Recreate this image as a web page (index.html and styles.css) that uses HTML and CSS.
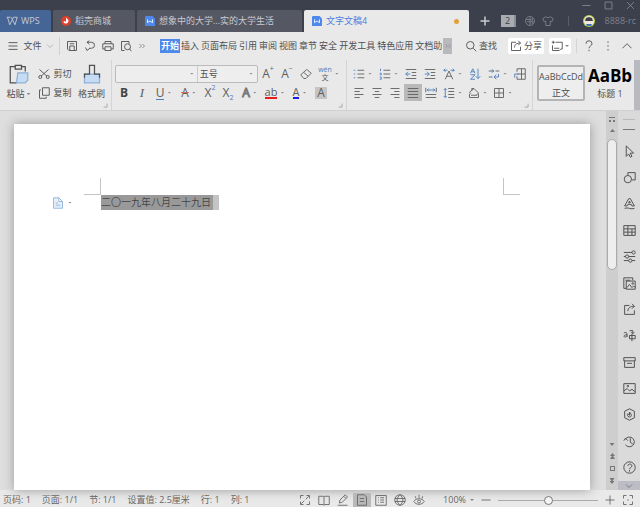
FILE: index.html
```html
<!DOCTYPE html>
<html lang="zh-CN">
<head>
<meta charset="UTF-8">
<meta name="viewport" content="width=device-width, initial-scale=1.0">
<title>文字文稿4 - WPS</title>
<link rel="stylesheet" href="styles.css">
</head>
<body>

<!-- 图标 -->
<svg class="sprite" aria-hidden="true">
  <symbol id="menu" viewBox="0 0 16 16"><path d="M2 3.500h12M2 8h12M2 12.500h12"/></symbol>
  <symbol id="down" viewBox="0 0 16 16"><path d="M2 5l6 6 6-6"/></symbol>
  <symbol id="up" viewBox="0 0 16 16"><path d="M2 11l6-6 6 6"/></symbol>
  <symbol id="save" viewBox="0 0 16 16"><path d="M2 2h12v12H4l-2-2zM5 14V8h6v6M5 5h6"/></symbol>
  <symbol id="undo" viewBox="0 0 16 16"><path d="M4 3h6a4 4 0 0 1 0 8H7M7 1L4 3l3 3M2 10l2 4 4-3"/></symbol>
  <symbol id="print" viewBox="0 0 16 16"><path d="M4 5V2h8v3M4 12H1V5h14v7h-3M4 9h8v5H4z"/></symbol>
  <symbol id="preview" viewBox="0 0 16 16"><path d="M6 14H2V2h10v3M13 12l2 3"/><circle cx="10" cy="9" r="4"/></symbol>
  <symbol id="more" viewBox="0 0 16 16"><path d="M3 4l4 4-4 4M9 4l4 4-4 4"/></symbol>
  <symbol id="search" viewBox="0 0 16 16"><circle cx="7" cy="7" r="5"/><path d="M11 11l4 4"/></symbol>
  <symbol id="share" viewBox="0 0 16 16"><path d="M8 3H2v11h12V9M6 10c0-4 3-6 8-6M11 1l3 3-3 3"/></symbol>
  <symbol id="comment" viewBox="0 0 16 16"><path d="M6 3h9v9h-2M2 7v7h9l2-2M1 3h4M3 1v4M4 11h7"/></symbol>
  <symbol id="help" viewBox="0 0 16 16"><path d="M4 5a4 4 0 0 1 8 0c0 3-4 3-4 6M8 13v2"/></symbol>
  <symbol id="dots" viewBox="0 0 16 16"><path d="M8 2v2M8 7v2M8 12v2"/></symbol>
  <symbol id="plus" viewBox="0 0 16 16"><path d="M8 2v12M2 8h12"/></symbol>
  <symbol id="minus" viewBox="0 0 16 16"><path d="M2 8h12"/></symbol>
  <symbol id="square" viewBox="0 0 16 16"><path d="M3 3h10v10H3z"/></symbol>
  <symbol id="close" viewBox="0 0 16 16"><path d="M3 3l10 10M13 3L3 13"/></symbol>
  <symbol id="wps" viewBox="0 0 16 16"><path d="M1 3h5M2 3l3 10 5-10h5l-3 10L7 3"/></symbol>
  <symbol id="globe2" viewBox="0 0 16 16"><circle cx="8" cy="8" r="6"/><path d="M3 6h7M4 9h9M8 3v11M11 4v8"/></symbol>
  <symbol id="shirt" viewBox="0 0 16 16"><path d="M5 2L1 5l2 4 2-1v6h6V8l2 1 2-4-4-3c-1 2-5 2-6 0z"/></symbol>
  <symbol id="cut" viewBox="0 0 16 16"><path d="M2 2l10 9M14 2L4 11"/><circle cx="3" cy="12" r="2"/><circle cx="13" cy="12" r="2"/></symbol>
  <symbol id="copy" viewBox="0 0 16 16"><path d="M6 1h9v10H6zM4 4H2v11h9v-2"/></symbol>
  <symbol id="paste" viewBox="0 0 16 16"><path d="M5 2H1v13h5M10 2h3v4M5 1h5v3H5z"/><path class="fill" d="M7 7h8v6l-2 2H6z"/></symbol>
  <symbol id="brush" viewBox="0 0 16 16"><path class="fill" d="M2 8h12v7H2z"/><path d="M2 11V8h4V1h4v7h4v3"/></symbol>
  <symbol id="eraser" viewBox="0 0 16 16"><path d="M1 9l8-7 6 5-7 7H5zM5 6l6 5"/></symbol>
  <symbol id="bullets" viewBox="0 0 16 16"><path d="M6 3h9M6 8h9M6 13h9"/><path class="blue" d="M1 3h2M1 8h2M1 13h2"/></symbol>
  <symbol id="numbers" viewBox="0 0 16 16"><path d="M6 3h9M6 8h9M6 13h9"/><path class="blue" d="M2 1v3M1 7h2v2H1M1 12h2v3H1"/></symbol>
  <symbol id="outdent" viewBox="0 0 16 16"><path d="M1 2h14M9 6h6M9 10h6M1 14h14"/><path class="blue" d="M7 8H1M4 5L1 8l3 3"/></symbol>
  <symbol id="indent" viewBox="0 0 16 16"><path d="M1 2h14M9 6h6M9 10h6M1 14h14"/><path class="blue" d="M1 8h6M4 5l3 3-3 3"/></symbol>
  <symbol id="scale" viewBox="0 0 16 16"><path d="M3 15L8 4l5 11M5 11h6"/><path class="blue" d="M1 3h5M3 1L1 3l2 2M15 3h-5M13 1l2 2-2 2"/></symbol>
  <symbol id="sort" viewBox="0 0 16 16"><path class="blue" d="M2 7l3-6 3 6M3 5h4M2 9h6l-6 6h6M12 1v13M9 11l3 3 3-3"/></symbol>
  <symbol id="wrap" viewBox="0 0 16 16"><path d="M1 4h6M10 4h5M1 12h5"/><path class="blue" d="M5 2l3 2-3 2M14 8v4H8M11 9l-3 3 3 3"/></symbol>
  <symbol id="tabs" viewBox="0 0 16 16"><path d="M4 1h11v14H4v-4M10 1v14M4 8h11M4 1v4"/><path class="blue" d="M6 8H1v5"/></symbol>
  <symbol id="left" viewBox="0 0 16 16"><path d="M2 2h12M2 6h7M2 10h12M2 14h7"/></symbol>
  <symbol id="center" viewBox="0 0 16 16"><path d="M2 2h12M5 6h6M2 10h12M5 14h6"/></symbol>
  <symbol id="right" viewBox="0 0 16 16"><path d="M2 2h12M7 6h7M2 10h12M7 14h7"/></symbol>
  <symbol id="justify" viewBox="0 0 16 16"><path d="M1 2h14M1 6h14M1 10h14M1 14h14"/></symbol>
  <symbol id="spread" viewBox="0 0 16 16"><path d="M1 10h14M1 14h14M1 1v6M15 1v6"/><path class="blue" d="M3 4h10M5 2L3 4l2 2M11 2l2 2-2 2"/></symbol>
  <symbol id="spacing" viewBox="0 0 16 16"><path d="M7 2h8M7 6h8M7 10h8M7 14h8"/><path class="blue" d="M3 2v12M1 4l2-2 2 2M1 12l2 2 2-2"/></symbol>
  <symbol id="bucket" viewBox="0 0 16 16"><path d="M4 9L2 7l6-5 6 6-3 3M5 5V2h3M2 9v5h12V9M4 11h8"/></symbol>
  <symbol id="grid" viewBox="0 0 16 16"><path d="M2 2h12v12H2zM8 2v12M2 8h12"/></symbol>
  <symbol id="pointer" viewBox="0 0 16 16"><path d="M4 1l9 9H9l2 4-2 1-2-4-3 3z"/></symbol>
  <symbol id="shapes" viewBox="0 0 16 16"><circle cx="6" cy="10" r="4.500"/><path d="M6 5V2h9v9h-4"/></symbol>
  <symbol id="wordart" viewBox="0 0 16 16"><path d="M2 11L7 2h2l5 9h-3l-1-2H6l-1 2zM7 7h2L8 5zM2 14c4-2 8 2 12 0"/></symbol>
  <symbol id="table" viewBox="0 0 16 16"><path d="M1 2h14v12H1zM1 6h14M1 10h14M6 2v12M11 6v8"/></symbol>
  <symbol id="sliders" viewBox="0 0 16 16"><path d="M1 3h10M1 8h2M7 8h8M1 13h6M11 13h4"/><circle cx="13" cy="3" r="2"/><circle cx="5" cy="8" r="2"/><circle cx="9" cy="13" r="2"/></symbol>
  <symbol id="gallery" viewBox="0 0 16 16"><path d="M4 14H1V1h11v3M4 5h11v10H4zM5 13l3-4 3 4 2-2 2 2M3 4h6"/><circle cx="12" cy="8" r="1"/></symbol>
  <symbol id="translate" viewBox="0 0 16 16"><path d="M1 5c4-2 4 0 4 5M5 7c-4 0-5 3-2 3l2-2M8 8h7v4H8zM11 6v9M8 2h4v3M10 4l2 2 2-2"/></symbol>
  <symbol id="archive" viewBox="0 0 16 16"><path d="M1 2h14v4H1zM2 6v8h12V6M5 9h6"/></symbol>
  <symbol id="image" viewBox="0 0 16 16"><path d="M1 2h14v12H1zM1 11l4-3 3 3 3-2 4 3"/><circle cx="6" cy="5" r="1"/></symbol>
  <symbol id="hexagon" viewBox="0 0 16 16"><path d="M8 1l6 3v8l-6 3-6-3V4zM8 5c3 3 3 6 0 6S5 8 6 7l2 2z"/></symbol>
  <symbol id="history" viewBox="0 0 16 16"><path d="M3 5a6 6 0 1 1 0 7M1 7l2-3 3 3M9 4v5l3 2"/></symbol>
  <symbol id="question" viewBox="0 0 16 16"><circle cx="8" cy="8" r="7"/><path d="M6 6c0-3 5-3 5 0 0 2-3 2-3 4M8 11v2"/></symbol>
  <symbol id="full" viewBox="0 0 16 16"><path d="M2 6V2h4M10 2h4v4M14 10v4h-4M6 14H2v-4M9 7l4-4M7 9l-4 4"/></symbol>
  <symbol id="book" viewBox="0 0 16 16"><path d="M1 3h6l1 1 1-1h6v11H9l-1 1-1-1H1zM8 4v11"/></symbol>
  <symbol id="pen" viewBox="0 0 16 16"><path d="M3 12l1-4 7-7 3 3-7 7zM1 15h13M9 3l3 3"/></symbol>
  <symbol id="page" viewBox="0 0 16 16"><path d="M2 1h9l3 3v11H2zM5 6h6M5 10h6"/></symbol>
  <symbol id="outline" viewBox="0 0 16 16"><path d="M1 2h14v13H1zM4 5h1M7 5h5M4 8h1M7 8h5M4 11h1M7 11h5"/></symbol>
  <symbol id="web" viewBox="0 0 16 16"><circle cx="8" cy="8" r="7"/><path d="M1 6h14M1 10h14M8 1c-5 4-5 10 0 14 5-4 5-10 0-14"/></symbol>
  <symbol id="eye" viewBox="0 0 16 16"><path d="M1 10c3-5 11-5 14 0-3 5-11 5-14 0M3 3l1 3M8 1v4M13 3l-1 3"/><circle cx="8" cy="10" r="2"/></symbol>
  <symbol id="fit" viewBox="0 0 16 16"><path d="M2 6V2h4M10 2h4v4M14 10v4h-4M6 14H2v-4M7 8h2"/></symbol>
  <symbol id="corner" viewBox="0 0 16 16"><path d="M2 13h11V2"/></symbol>
</svg>

<!-- 标题栏 -->
<header class="titlebar">
  <nav class="tabs">
    <a class="tab home" href="#"><svg class="icon"><use href="#wps"/></svg>WPS</a>
    <a class="tab store" href="#">
      <svg class="logo" viewBox="0 0 12 12"><circle cx="6" cy="6" r="6" fill="#df3f2d"/><path d="M6 2c3 2 4 4 2 6s-5 1-5-1l1-1 2 1z" fill="#fff"/></svg>稻壳商城</a>
    <a class="tab doc" href="#">
      <svg class="logo" viewBox="0 0 12 12"><path d="M1 0h8l3 3v9H0V1z" fill="#4d88ea"/><path d="M3 4v4l3-2 3 2V4" fill="none" stroke="#fff" stroke-width="1"/></svg>想象中的大学...实的大学生活</a>
    <a class="tab doc current" href="#">
      <svg class="logo" viewBox="0 0 12 12"><path d="M1 0h8l3 3v9H0V1z" fill="#4d88ea"/><path d="M3 4v4l3-2 3 2V4" fill="none" stroke="#fff" stroke-width="1"/></svg>文字文稿4<span class="unsaved"></span></a>
  </nav>
  <button class="new-tab" aria-label="新建"><svg class="icon"><use href="#plus"/></svg></button>
  <span class="count">2</span>
  <div class="account-area">
    <div class="window-buttons">
      <button aria-label="最小化"><svg class="icon"><use href="#minus"/></svg></button>
      <button aria-label="最大化"><svg class="icon"><use href="#square"/></svg></button>
      <button aria-label="关闭"><svg class="icon"><use href="#close"/></svg></button>
    </div>
    <div class="account">
      <svg class="icon"><use href="#globe2"/></svg>
      <svg class="icon"><use href="#shirt"/></svg>
      <span class="bar"></span>
      <svg class="avatar" viewBox="0 0 12 12"><circle cx="6" cy="6" r="6" fill="#b5d44b"/><circle cx="6" cy="6" r="5" fill="#f2e6df"/><path d="M2 6l1-3 3-1 3 1 1 3z" fill="#44404a"/><path d="M3 9h6l-1 2H4z" fill="#3d72b8"/></svg>
      <span class="user">8888-rc</span>
    </div>
  </div>
</header>

<!-- 菜单栏 -->
<div class="menubar">
  <button class="file"><svg class="icon"><use href="#menu"/></svg>文件<svg class="icon tiny"><use href="#down"/></svg></button>
  <div class="quick">
    <button aria-label="保存"><svg class="icon"><use href="#save"/></svg></button>
    <button aria-label="撤销"><svg class="icon"><use href="#undo"/></svg></button>
    <button aria-label="打印"><svg class="icon"><use href="#print"/></svg></button>
    <button aria-label="打印预览"><svg class="icon"><use href="#preview"/></svg></button>
    <button aria-label="更多"><svg class="icon tiny"><use href="#more"/></svg></button>
  </div>
  <nav class="menus">
    <a class="on" href="#">开始</a><a href="#">插入</a><a href="#">页面布局</a><a href="#">引用</a><a href="#">审阅</a><a href="#">视图</a><a href="#">章节</a><a href="#">安全</a><a href="#">开发工具</a><a href="#">特色应用</a><a href="#">文档助</a>
  </nav>
  <button class="scroll-menus" aria-label="向右"><svg class="icon tiny"><use href="#more"/></svg></button>
  <div class="menu-tools">
    <button class="find"><svg class="icon"><use href="#search"/></svg>查找</button>
    <button class="white"><svg class="icon"><use href="#share"/></svg>分享</button>
    <button class="white" aria-label="批注"><svg class="icon"><use href="#comment"/></svg><i class="caret"></i></button>
    <span class="divider"></span>
    <button class="plain" aria-label="帮助"><svg class="icon"><use href="#help"/></svg></button>
    <button class="plain" aria-label="选项"><svg class="icon"><use href="#dots"/></svg></button>
    <button class="plain" aria-label="收起"><svg class="icon"><use href="#up"/></svg></button>
  </div>
</div>

<!-- 功能区 -->
<div class="ribbon">
  <section class="group clipboard">
    <button class="big"><svg class="icon large"><use href="#paste"/></svg><span>粘贴<i class="caret"></i></span></button>
    <div class="pair">
      <button><svg class="icon"><use href="#cut"/></svg>剪切</button>
      <button><svg class="icon"><use href="#copy"/></svg>复制</button>
    </div>
    <button class="big"><svg class="icon large"><use href="#brush"/></svg><span>格式刷</span></button>
    <svg class="launcher"><use href="#corner"/></svg>
  </section>

  <section class="group font">
    <div class="row spaced">
      <div class="combo">
        <input class="family" type="text" aria-label="字体"><i class="caret"></i>
        <input class="size" type="text" aria-label="字号" value="五号"><i class="caret"></i>
      </div>
      <button class="tool">A<sup>+</sup></button>
      <button class="tool">A<sup>−</sup></button>
      <button class="tool" aria-label="清除格式"><svg class="icon"><use href="#eraser"/></svg></button>
      <button class="tool wide"><span class="pinyin"><b>wén</b><span>文</span></span><i class="caret"></i></button>
    </div>
    <div class="row">
      <button class="tool bold">B</button>
      <button class="tool italic">I</button>
      <button class="tool wide"><span class="under">U</span><i class="caret"></i></button>
      <button class="tool wide"><span class="strike">A</span><i class="caret"></i></button>
      <button class="tool">X<sup class="blue-text">2</sup></button>
      <button class="tool">X<sub class="blue-text">2</sub></button>
      <button class="tool wide"><span class="hollow">A</span><i class="caret"></i></button>
      <button class="tool wide"><span class="mark red">ab</span><i class="caret"></i></button>
      <button class="tool wide"><span class="mark">A</span><i class="caret"></i></button>
      <button class="tool"><span class="shade">A</span></button>
    </div>
    <svg class="launcher"><use href="#corner"/></svg>
  </section>

  <section class="group paragraph">
    <div class="row spaced">
      <button class="tool wide" aria-label="项目符号"><svg class="icon"><use href="#bullets"/></svg><i class="caret"></i></button>
      <button class="tool wide" aria-label="编号"><svg class="icon"><use href="#numbers"/></svg><i class="caret"></i></button>
      <button class="tool" aria-label="减少缩进"><svg class="icon"><use href="#outdent"/></svg></button>
      <button class="tool" aria-label="增加缩进"><svg class="icon"><use href="#indent"/></svg></button>
      <button class="tool wide" aria-label="字符缩放"><svg class="icon"><use href="#scale"/></svg><i class="caret"></i></button>
      <button class="tool" aria-label="排序"><svg class="icon"><use href="#sort"/></svg></button>
      <button class="tool wide" aria-label="换行"><svg class="icon"><use href="#wrap"/></svg><i class="caret"></i></button>
      <button class="tool" aria-label="制表位"><svg class="icon"><use href="#tabs"/></svg></button>
    </div>
    <div class="row">
      <button class="tool" aria-label="左对齐"><svg class="icon"><use href="#left"/></svg></button>
      <button class="tool" aria-label="居中"><svg class="icon"><use href="#center"/></svg></button>
      <button class="tool" aria-label="右对齐"><svg class="icon"><use href="#right"/></svg></button>
      <button class="tool pressed" aria-label="两端对齐"><svg class="icon"><use href="#justify"/></svg></button>
      <button class="tool" aria-label="分散对齐"><svg class="icon"><use href="#spread"/></svg></button>
      <button class="tool wide" aria-label="行距"><svg class="icon"><use href="#spacing"/></svg><i class="caret"></i></button>
      <button class="tool wide" aria-label="底纹"><svg class="icon"><use href="#bucket"/></svg><i class="caret"></i></button>
      <button class="tool wide" aria-label="边框"><svg class="icon"><use href="#grid"/></svg><i class="caret"></i></button>
    </div>
    <svg class="launcher"><use href="#corner"/></svg>
  </section>

  <section class="styles">
    <button class="style chosen"><span class="sample">AaBbCcDd</span><span>正文</span></button>
    <button class="style"><span class="sample heading">AaBb</span><span>标题 1</span></button>
  </section>
  <button class="ribbon-scroll" aria-label="更多"></button>
</div>

<!-- 文档区 -->
<main class="workspace">
  <div class="canvas">
    <article class="page">
      <div class="margins"><span class="crop top-left"></span><span class="crop top-right"></span></div>
      <div class="line">
        <button class="para-mark" aria-label="段落">
          <svg class="icon" viewBox="0 0 16 16"><path class="pale" d="M2 1h7l5 5v9H2zM9 1v5h5M5 8h3M5 11h6"/></svg><i class="caret"></i>
        </button>
        <p><span class="selected">二〇一九年八月二十九日</span></p>
      </div>
    </article>
  </div>
  <div class="scrollbar">
    <i class="ruler-mark"></i>
    <i class="arrow upward"></i>
    <div class="track"><div class="thumb"></div></div>
    <i class="arrow"></i>
    <i class="arrow double upward"></i>
    <i class="dot"></i>
    <i class="arrow double"></i>
  </div>
  <aside class="sidebar">
    <i class="grip"></i>
    <div class="side-icons">
      <button aria-label="选择"><svg class="icon"><use href="#pointer"/></svg></button>
      <button aria-label="形状"><svg class="icon"><use href="#shapes"/></svg></button>
      <button aria-label="艺术字"><svg class="icon"><use href="#wordart"/></svg></button>
      <button aria-label="表格"><svg class="icon"><use href="#table"/></svg></button>
      <button aria-label="属性"><svg class="icon"><use href="#sliders"/></svg></button>
      <button aria-label="图库"><svg class="icon"><use href="#gallery"/></svg></button>
      <button aria-label="分享"><svg class="icon"><use href="#share"/></svg></button>
      <button aria-label="翻译"><svg class="icon"><use href="#translate"/></svg></button>
      <button aria-label="归档"><svg class="icon"><use href="#archive"/></svg></button>
      <button aria-label="图片"><svg class="icon"><use href="#image"/></svg></button>
      <button aria-label="稻壳"><svg class="icon"><use href="#hexagon"/></svg></button>
      <button aria-label="历史"><svg class="icon"><use href="#history"/></svg></button>
      <button aria-label="帮助"><svg class="icon"><use href="#question"/></svg></button>
    </div>
    <button class="side-more" aria-label="更多"><svg class="icon tiny"><use href="#down"/></svg></button>
  </aside>
</main>

<!-- 状态栏 -->
<footer class="status">
  <div class="info">
    <span>页码: 1</span><span>页面: 1/1</span><span>节: 1/1</span><span>设置值: 2.5厘米</span><span>行: 1</span><span>列: 1</span>
  </div>
  <div class="views">
    <button aria-label="全屏"><svg class="icon"><use href="#full"/></svg></button>
    <button aria-label="阅读"><svg class="icon"><use href="#book"/></svg></button>
    <button aria-label="写作"><svg class="icon"><use href="#pen"/></svg></button>
    <button class="pressed" aria-label="页面"><svg class="icon"><use href="#page"/></svg></button>
    <button aria-label="大纲"><svg class="icon"><use href="#outline"/></svg></button>
    <button aria-label="网页"><svg class="icon"><use href="#web"/></svg></button>
    <button aria-label="护眼"><svg class="icon"><use href="#eye"/></svg></button>
  </div>
  <div class="zoom">
    <button class="percent">100%<i class="caret"></i></button>
    <button aria-label="缩小"><svg class="icon"><use href="#minus"/></svg></button>
    <input type="range" min="0" max="100" value="50" aria-label="缩放">
    <button aria-label="放大"><svg class="icon"><use href="#plus"/></svg></button>
    <button aria-label="适合"><svg class="icon"><use href="#fit"/></svg></button>
  </div>
</footer>

</body>
</html>
```
FILE: styles.css
```css
* {
  box-sizing: border-box;
}

body {
  margin: 0;
  height: 100vh;
  display: flex;
  flex-direction: column;
  overflow: hidden;
  background: #e9e9e9;
  color: #505050;
  font-family: "Open Sans", "Noto Sans CJK SC", sans-serif;
  font-size: 9px;
  line-height: 12px;
}

button,
input {
  margin: 0;
  padding: 0;
  border: none;
  background: none;
  color: inherit;
  font: inherit;
}

button {
  display: flex;
  align-items: center;
  justify-content: center;
  white-space: nowrap;
}

a {
  color: inherit;
  text-decoration: none;
}

/* 图标 */
.sprite {
  display: none;
}

.icon {
  flex: none;
  width: 12px;
  height: 12px;
  fill: none;
  stroke: currentColor;
  stroke-width: 1.2;
}

.icon.large {
  width: 20px;
  height: 20px;
  stroke-width: 1;
}

.icon.tiny {
  width: 8px;
  height: 8px;
}

.blue {
  stroke: #4a7fc0;
}

.fill {
  fill: #c5dcf3;
  stroke: #8db2da;
}

.pale {
  fill: #e4effa;
  stroke: #8fb4dc;
}

.caret {
  flex: none;
  display: inline-block;
  width: 4px;
  height: 2px;
  background: #888;
  clip-path: polygon(0 0, 100% 0, 50% 100%);
}

/* 标题栏 */
.titlebar {
  flex: none;
  display: flex;
  align-items: flex-end;
  height: 32px;
  background: #3c3f4c;
  color: #c9cad0;
}

.tabs {
  display: flex;
  gap: 2px;
}

.tab {
  display: flex;
  align-items: center;
  gap: 4px;
  height: 22px;
  padding: 0 8px;
  border-radius: 2px 2px 0 0;
  background: #555763;
  white-space: nowrap;
}

.tab.home {
  width: 51px;
  padding: 0 6px;
  gap: 3px;
  background: #456596;
}

.tab.store {
  width: 82px;
}

.tab.doc {
  width: 165px;
}

.tab.current {
  background: #e9e9e9;
  color: #4d80df;
}

.logo {
  width: 10px;
  height: 10px;
}

.unsaved {
  width: 5px;
  height: 5px;
  margin: 0 2px 0 auto;
  border-radius: 50%;
  background: #e0a03c;
}

.new-tab {
  width: 32px;
  height: 22px;
}

.new-tab .icon {
  stroke-width: 2;
}

.count {
  width: 15px;
  height: 12px;
  margin-bottom: 5px;
  border-right: 2px solid #8b8d95;
  background: #aaabb0;
  color: #3c3f4c;
  text-align: center;
}

.account-area {
  margin-left: auto;
  padding-right: 4px;
}

.window-buttons {
  display: flex;
  justify-content: flex-end;
  gap: 11px;
  height: 10px;
  color: #8a8c95;
}

.window-buttons .icon {
  width: 11px;
  height: 11px;
}

.account {
  display: flex;
  align-items: center;
  gap: 6px;
  height: 22px;
  color: #7f818b;
}

.bar {
  width: 1px;
  height: 10px;
  margin: 0 8px;
  background: #5b5e69;
}

.avatar {
  width: 12px;
  height: 12px;
}

.user {
  padding-left: 4px;
}

/* 菜单栏 */
.menubar {
  flex: none;
  display: flex;
  align-items: center;
  height: 28px;
  white-space: nowrap;
}

.file {
  width: 60px;
  height: 18px;
  gap: 4px;
  padding-left: 2px;
  border-right: 1px solid #d0d0d0;
}

.file .tiny {
  color: #999;
}

.quick {
  display: flex;
  gap: 6px;
  padding-left: 6px;
  width: 100px;
}

.menus {
  display: flex;
}

.menus a {
  flex: none;
  padding: 1px 1px;
}

.menus .on {
  background: #4d88ea;
  color: #fff;
  font-weight: bold;
}

.scroll-menus {
  width: 9px;
  height: 16px;
  background: #b9b9bd;
  color: #888;
}

.menu-tools {
  flex: 1;
  display: flex;
  align-items: center;
  justify-content: flex-end;
  gap: 5px;
  padding-right: 6px;
}

.menu-tools button {
  gap: 2px;
}

.menu-tools .find {
  margin-right: 6px;
}

.menu-tools .white {
  height: 16px;
  padding: 0 2px;
  border-radius: 2px;
  background: #fff;
}

.menu-tools .plain {
  width: 14px;
}

.divider {
  width: 1px;
  height: 14px;
  background: #d4d4d4;
}

/* 功能区 */
.ribbon {
  flex: none;
  display: flex;
  height: 51px;
  border-bottom: 1px solid #d0d0d0;
}

.group {
  position: relative;
  flex: none;
  padding: 4px 3px 0;
  border-right: 1px solid #d4d4d4;
}

.launcher {
  position: absolute;
  right: 3px;
  bottom: 2px;
  width: 5px;
  height: 5px;
  fill: none;
  stroke: #888;
  stroke-width: 2;
}

.clipboard {
  display: flex;
  width: 112px;
}

.big {
  flex-direction: column;
  align-items: center;
  justify-content: space-between;
  width: 31px;
  height: 36px;
}

.big span {
  display: flex;
  align-items: center;
  gap: 2px;
}

.pair {
  display: flex;
  flex-direction: column;
  width: 42px;
}

.pair button {
  height: 19px;
  gap: 3px;
}

.font {
  width: 235px;
}

.paragraph {
  width: 186px;
}

.row {
  display: flex;
  align-items: center;
  height: 19px;
}

.spaced {
  gap: 1px;
}

.tool {
  flex: none;
  width: 18px;
  height: 17px;
  color: #606060;
  font-size: 12px;
  line-height: 16px;
}

.wide {
  width: 25px;
  gap: 3px;
}

.tool sup,
.tool sub {
  font-size: 7px;
  line-height: 7px;
}

.tool sup {
  align-self: flex-start;
}

.tool sub {
  align-self: flex-end;
}

.tool .blue-text {
  color: #4a7fc0;
}

.combo {
  display: flex;
  align-items: center;
  width: 143px;
  height: 18px;
  padding-right: 4px;
  border: 1px solid #bbb;
  border-radius: 2px;
  background: #eee;
}

.combo input {
  min-width: 0;
}

.combo .family {
  flex: 3;
}

.combo .size {
  flex: 2;
  height: 16px;
  margin-left: 3px;
  padding-left: 2px;
  border-left: 1px solid #ccc;
}

.bold {
  color: #444;
  font-weight: bold;
}

.italic {
  font-family: "Liberation Serif", serif;
  font-size: 13px;
  font-style: italic;
}

.under {
  height: 14px;
  border-bottom: 1px solid #4a7fc0;
  line-height: 13px;
}

.strike {
  text-decoration: line-through #d06a5c 1px;
}

.hollow {
  color: #eee;
  -webkit-text-stroke: 1px #777;
}

.mark {
  height: 13px;
  border-bottom: 2px solid #1c1ce8;
  font-size: 11px;
  line-height: 11px;
}

.mark.red {
  border-color: #e81c1c;
}

.shade {
  width: 12px;
  height: 12px;
  background: #c4c4c4;
  line-height: 12px;
}

.pinyin {
  display: flex;
  flex-direction: column;
  align-items: center;
  font-size: 7px;
  line-height: 8px;
}

.pinyin b {
  color: #4a7fc0;
  font-weight: normal;
}

.pressed {
  background: #b9b9b9;
}

.styles {
  flex: 1;
  display: flex;
  gap: 1px;
  min-width: 0;
  padding: 5px 1px 0 4px;
  overflow: hidden;
}

.style {
  flex: none;
  flex-direction: column;
  justify-content: flex-end;
  width: 48px;
  height: 36px;
  border: 1px solid transparent;
}

.style.chosen {
  border: 2px solid #b4b4b4;
  border-radius: 2px;
  background: #eee;
}

.sample {
  line-height: 20px;
}

.sample.heading {
  color: #000;
  font-size: 17px;
  font-weight: bold;
  line-height: 24px;
}

.ribbon-scroll {
  flex: none;
  width: 6px;
  background: #b9bac0;
}

/* 文档区 */
.workspace {
  flex: 1;
  display: flex;
  min-height: 0;
}

.canvas {
  flex: 1;
  display: flex;
  padding: 13px 16px 0 14px;
  background: #dedede;
}

.page {
  flex: 1;
  padding: 54px 70px 0 38px;
  background: #fff;
  box-shadow: 0 0 10px #999;
}

.margins {
  display: flex;
  justify-content: space-between;
  padding-left: 32px;
}

.crop {
  width: 17px;
  height: 17px;
  border-bottom: 1px solid #c4c4c4;
}

.top-left {
  border-right: 1px solid #c4c4c4;
}

.top-right {
  border-left: 1px solid #c4c4c4;
}

.line {
  display: flex;
  align-items: center;
}

.para-mark {
  width: 20px;
  gap: 4px;
  margin-right: 29px;
}

.line p {
  margin: 0;
  padding-right: 6px;
  background: #c4c4c4;
  color: #222;
  font-size: 10px;
  font-weight: 300;
  line-height: 15px;
}

.selected {
  display: block;
  padding-right: 2px;
  background: #999;
}

.scrollbar {
  display: flex;
  flex-direction: column;
  align-items: center;
  gap: 7px;
  width: 12px;
  padding: 6px 1px 6px;
  background: #cecece;
}

.track {
  flex: 1;
  width: 10px;
}

.thumb {
  height: 44%;
  border: 1px solid #aaa;
  border-radius: 5px;
  background: #eee;
}

.arrow {
  width: 5px;
  height: 3px;
  background: #777;
  clip-path: polygon(0 0, 100% 0, 50% 100%);
}

.upward {
  transform: rotate(180deg);
}

.arrow.double {
  height: 6px;
  clip-path: polygon(0 0, 100% 0, 60% 50%, 100% 50%, 50% 100%, 0 50%, 40% 50%);
}

.dot {
  width: 5px;
  height: 5px;
  border: 1px solid #777;
}

.ruler-mark {
  width: 6px;
  height: 5px;
  border-top: 1px solid #777;
  border-bottom: 2px dotted #777;
}

.sidebar {
  display: flex;
  flex-direction: column;
  align-items: center;
  width: 22px;
  background: #dadada;
}

.grip {
  width: 12px;
  height: 11px;
  margin: 8px 0 8px;
  border-top: 1px solid #bbb;
  border-bottom: 1px solid #777;
}

.side-icons {
  flex: 1;
  display: flex;
  flex-direction: column;
  justify-content: space-around;
}

.side-icons .icon {
  width: 13px;
  height: 13px;
}

.side-more {
  width: 100%;
  height: 9px;
  background: #bcbdc4;
}

/* 状态栏 */
.status {
  flex: none;
  display: flex;
  align-items: center;
  height: 17px;
  padding: 3px 6px 0 3px;
  color: #666;
  white-space: nowrap;
}

.info {
  display: flex;
  gap: 11px;
}

.views {
  display: flex;
  gap: 1px;
  margin-left: auto;
}

.views button {
  width: 18px;
  height: 15px;
}

.zoom {
  display: flex;
  align-items: center;
  gap: 6px;
  padding-left: 15px;
}

.percent {
  gap: 4px;
}

.zoom input {
  appearance: none;
  width: 100px;
  height: 12px;
}

.zoom input::-webkit-slider-runnable-track {
  height: 1px;
  background: #aaa;
}

.zoom input::-webkit-slider-thumb {
  appearance: none;
  width: 9px;
  height: 9px;
  margin-top: -4px;
  border: 1px solid #777;
  border-radius: 50%;
  background: #f4f4f4;
}
```
